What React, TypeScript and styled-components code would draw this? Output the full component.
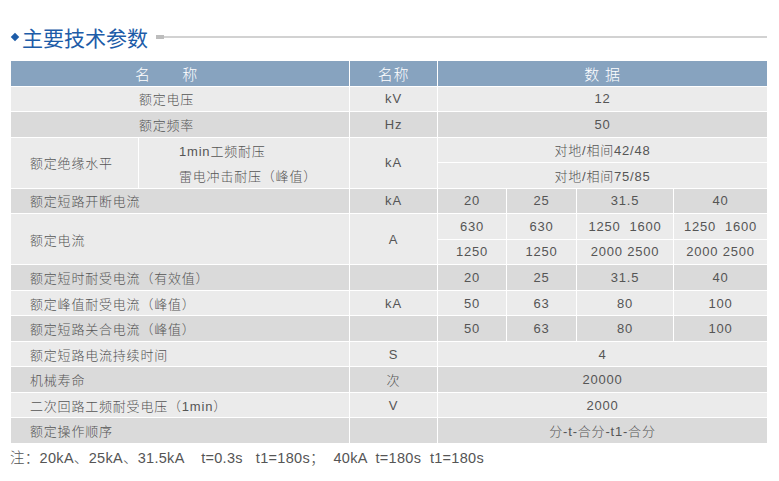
import React from "react";
import styled, { createGlobalStyle } from "styled-components";

const GlobalStyle = createGlobalStyle`
  html, body {
    margin: 0;
    padding: 0;
    background: #ffffff;
  }
  body {
    font-family: "Liberation Sans", "Noto Sans CJK SC", sans-serif;
  }
`;

type Tone = "head" | "light" | "dark";
type Align = "center" | "left" | "offset";

const toneBg: Record<Tone, string> = {
  head: "#87a3bf",
  light: "#ebebeb",
  dark: "#dadada",
};

const Page = styled.div`
  width: 779px;
  padding: 24px 12px 0 11px;
  box-sizing: border-box;
`;

const TitleBar = styled.div`
  display: flex;
  align-items: center;
  height: 26px;
  margin-bottom: 11px;
`;

const Diamond = styled.span`
  width: 6px;
  height: 6px;
  background: #1d5ca8;
  transform: rotate(45deg);
  margin: 0 4px 0 1px;
  flex: none;
`;

const TitleText = styled.h2`
  margin: 0;
  font-family: "Noto Sans CJK SC", sans-serif;
  font-size: 21px;
  font-weight: 400;
  color: #1d5ca8;
  line-height: 26px;
`;

const TitleMark = styled.span`
  width: 8px;
  height: 4px;
  background: #bdbdbd;
  margin-left: 8px;
  flex: none;
`;

const TitleLine = styled.span`
  flex: 1;
  height: 2px;
  background: #d2d2d2;
`;

const Grid = styled.div`
  display: grid;
  grid-template-columns: 127px 210px 87px 68px 69px 96px 93px;
  grid-template-rows: repeat(15, 1fr);
  gap: 1px;
  width: 756px;
  height: 382px;
`;

const Cell = styled.div<{ $tone: Tone; $c: string; $r: string; $align?: Align }>`
  grid-column: ${(p) => p.$c};
  grid-row: ${(p) => p.$r};
  background: ${(p) => toneBg[p.$tone]};
  display: flex;
  align-items: center;
  justify-content: ${(p) => (p.$align === "left" ? "flex-start" : "center")};
  padding-left: ${(p) => (p.$align === "left" ? "19px" : "0")};
  padding-right: ${(p) => (p.$align === "offset" ? "27px" : "0")};
  color: ${(p) => (p.$tone === "head" ? "#ffffff" : "#555555")};
  font-size: ${(p) => (p.$tone === "head" ? "15px" : "13px")};
  font-weight: 300;
  letter-spacing: 0.8px;
  white-space: pre;
`;

const StackCell = styled(Cell)`
  flex-direction: column;
  align-items: stretch;
  padding-left: 40px;
`;

const StackLine = styled.div`
  flex: 1;
  display: flex;
  align-items: center;
`;

const Note = styled.p`
  margin: 3px 0 0 -1px;
  font-size: 14.5px;
  font-weight: 300;
  color: #555555;
  letter-spacing: 0.3px;
  white-space: pre;
`;

type Row = {
  row: number;
  tone: Tone;
  name: string;
  align: Align;
  unit: string;
  values: string[];
};

const rows: Row[] = [
  { row: 2, tone: "light", name: "额定电压", align: "offset", unit: "kV", values: ["12"] },
  { row: 3, tone: "dark", name: "额定频率", align: "offset", unit: "Hz", values: ["50"] },
  { row: 6, tone: "dark", name: "额定短路开断电流", align: "left", unit: "kA", values: ["20", "25", "31.5", "40"] },
  { row: 9, tone: "dark", name: "额定短时耐受电流（有效值）", align: "left", unit: "", values: ["20", "25", "31.5", "40"] },
  { row: 10, tone: "light", name: "额定峰值耐受电流（峰值）", align: "left", unit: "kA", values: ["50", "63", "80", "100"] },
  { row: 11, tone: "dark", name: "额定短路关合电流（峰值）", align: "left", unit: "", values: ["50", "63", "80", "100"] },
  { row: 12, tone: "light", name: "额定短路电流持续时间", align: "left", unit: "S", values: ["4"] },
  { row: 13, tone: "dark", name: "机械寿命", align: "left", unit: "次", values: ["20000"] },
  { row: 14, tone: "light", name: "二次回路工频耐受电压（1min）", align: "left", unit: "V", values: ["2000"] },
  { row: 15, tone: "dark", name: "额定操作顺序", align: "left", unit: "", values: ["分-t-合分-t1-合分"] },
];

const renderValues = (values: string[], r: string, tone: Tone, key: string) =>
  values.length === 1 ? (
    <Cell key={key} $tone={tone} $c="4 / 8" $r={r}>
      {values[0]}
    </Cell>
  ) : (
    values.map((v, i) => (
      <Cell key={key + i} $tone={tone} $c={`${4 + i}`} $r={r}>
        {v}
      </Cell>
    ))
  );

const App = () => {
  return (
    <Page>
      <GlobalStyle />
      <TitleBar>
        <Diamond />
        <TitleText>主要技术参数</TitleText>
        <TitleMark />
        <TitleLine />
      </TitleBar>

      <Grid>
        <Cell $tone="head" $c="1 / 3" $r="1" $align="offset">名　　称</Cell>
        <Cell $tone="head" $c="3" $r="1">名称</Cell>
        <Cell $tone="head" $c="4 / 8" $r="1">数 据</Cell>

        {rows.map((row) => {
          const r = `${row.row}`;
          return (
            <React.Fragment key={row.row}>
              <Cell $tone={row.tone} $c="1 / 3" $r={r} $align={row.align}>
                {row.name}
              </Cell>
              <Cell $tone={row.tone} $c="3" $r={r}>
                {row.unit}
              </Cell>
              {renderValues(row.values, r, row.tone, `v${row.row}`)}
            </React.Fragment>
          );
        })}

        {/* 额定绝缘水平 */}
        <Cell $tone="light" $c="1" $r="4 / 6" $align="left">额定绝缘水平</Cell>
        <StackCell $tone="light" $c="2" $r="4 / 6">
          <StackLine>1min工频耐压</StackLine>
          <StackLine>雷电冲击耐压（峰值）</StackLine>
        </StackCell>
        <Cell $tone="light" $c="3" $r="4 / 6">kA</Cell>
        {renderValues(["对地/相间42/48"], "4", "light", "ins1")}
        {renderValues(["对地/相间75/85"], "5", "light", "ins2")}

        {/* 额定电流 */}
        <Cell $tone="light" $c="1 / 3" $r="7 / 9" $align="left">额定电流</Cell>
        <Cell $tone="light" $c="3" $r="7 / 9">A</Cell>
        {renderValues(["630", "630", "1250  1600", "1250  1600"], "7", "light", "cur1")}
        {renderValues(["1250", "1250", "2000 2500", "2000 2500"], "8", "light", "cur2")}
      </Grid>

      <Note>注：20kA、25kA、31.5kA    t=0.3s   t1=180s；  40kA  t=180s  t1=180s</Note>
    </Page>
  );
};

export default App;
